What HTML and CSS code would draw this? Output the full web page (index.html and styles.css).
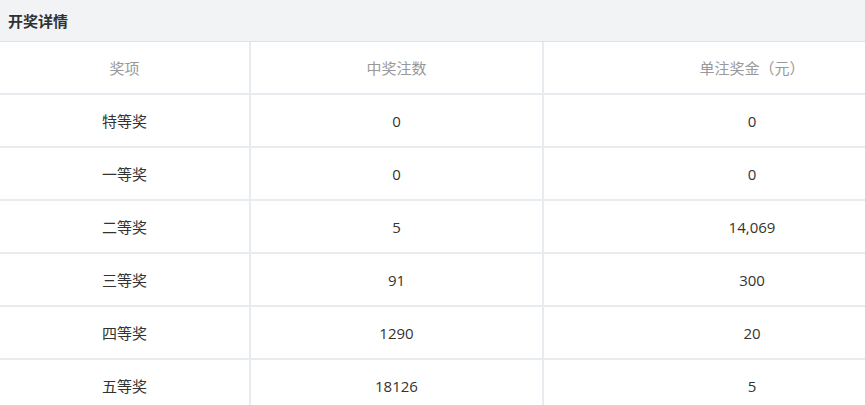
FILE: index.html
```html
<!DOCTYPE html>
<html lang="zh-CN">
<head>
<meta charset="utf-8">
<title>开奖详情</title>
<link rel="stylesheet" href="styles.css">
</head>
<body>
<div class="viewport">
<div class="panel">
  <div class="panel-head">开奖详情</div>
  <div class="grid">
    <div class="cell th">奖项</div><div class="cell th">中奖注数</div><div class="cell th">单注奖金（元）</div>
    <div class="cell">特等奖</div><div class="cell">0</div><div class="cell">0</div>
    <div class="cell">一等奖</div><div class="cell">0</div><div class="cell">0</div>
    <div class="cell">二等奖</div><div class="cell">5</div><div class="cell">14,069</div>
    <div class="cell">三等奖</div><div class="cell">91</div><div class="cell">300</div>
    <div class="cell">四等奖</div><div class="cell">1290</div><div class="cell">20</div>
    <div class="cell">五等奖</div><div class="cell">18126</div><div class="cell">5</div>
  </div>
</div>
</div>
</body>
</html>
```
FILE: styles.css
```css
html, body {
  margin: 0;
  padding: 0;
  background: #ffffff;
  overflow: hidden;
}
.viewport {
  width: 100vw;
  height: 100vh;
  overflow: hidden;
}
.panel {
  width: 960px;
  font-family: "Open Sans", "Noto Sans CJK SC", sans-serif;
}
.panel-head {
  height: 42px;
  box-sizing: border-box;
  padding-left: 8px;
  display: flex;
  align-items: center;
  background: #f2f3f5;
  border-bottom: 1px solid #dfe3e8;
  font-size: 15px;
  font-weight: bold;
  color: #303133;
  font-family: "Noto Sans CJK SC", sans-serif;
}
.grid {
  display: grid;
  grid-template-columns: 251px 293px 416px;
  grid-auto-rows: 53px;
}
.cell {
  display: flex;
  align-items: center;
  justify-content: center;
  font-size: 15px;
  color: #333333;
  border-bottom: 2px solid #e8ebef;
  box-sizing: border-box;
}
.cell:nth-child(3n+1),
.cell:nth-child(3n+2) {
  border-right: 2px solid #e8ebef;
}
.th {
  color: #999999;
}
```
